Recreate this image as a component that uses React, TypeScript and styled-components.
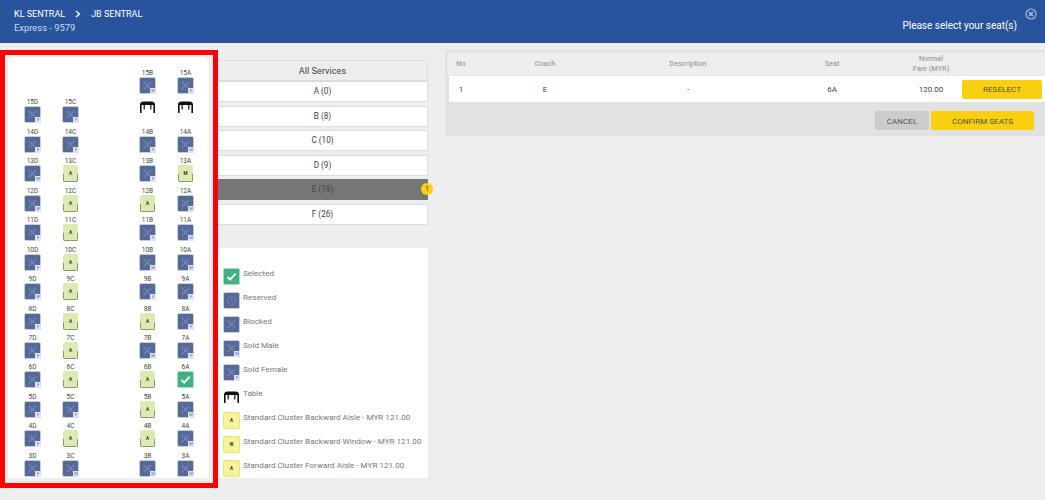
import React from "react";
import styled, {createGlobalStyle} from "styled-components";

const GlobalStyle = createGlobalStyle`
  html, body {
    margin: 0;
    padding: 0;
    height: 100%;
    background: #eeeeee;
    overflow: hidden;
    font-family: Roboto, "Liberation Sans", sans-serif;
  }
`

const Page = styled.div`
  width: 1045px;
  height: 500px;
  overflow: hidden;
  background: #eeeeee;
`

const Header = styled.header`
  height: 43px;
  background: #27549c;
  color: white;
  display: flex;
  justify-content: space-between;
  padding: 8px 15px 0 14px;
  box-sizing: border-box;
  position: relative;
`

const RouteBlock = styled.div`
  display: flex;
  flex-direction: column;
  gap: 2px;
`

const RouteLine = styled.div`
  display: flex;
  align-items: center;
  font-size: 9px;
  line-height: 12px;
  gap: 10px;
`

const ServiceLine = styled.div`
  font-size: 9.4px;
  line-height: 12px;
  color: #cfd9ea;
`

const HeaderTitle = styled.div`
  font-size: 10px;
  line-height: 14px;
  margin-top: 11px;
  margin-right: 13px;
`

const CloseButton = styled.div`
  position: absolute;
  top: 8px;
  right: 8px;
  color: #a9bcdc;
  display: flex;
`

const Main = styled.main`
  display: flex;
  padding: 7px 0 0 0;
`

const SeatFrame = styled.section`
  width: 218px;
  height: 438px;
  box-sizing: border-box;
  border: 5px solid #ff0000;
  background: #eeeeee;
  flex: none;
  overflow: hidden;
  padding: 2px 4px 0 3px;
`

const SeatPanel = styled.div`
  background: white;
  border-radius: 6px 6px 0 0;
  height: 421px;
  overflow: hidden;
  padding: 12px 0 0 16px;
  box-sizing: border-box;
  display: grid;
  grid-template-columns: 17px 17px 18px 17px 17px;
  column-gap: 21px;
  grid-auto-rows: 29.45px;
`

const SeatCell = styled.div`
  width: 17px;
  display: flex;
  flex-direction: column;
  align-items: center;
`

const SeatLabel = styled.div`
  font-size: 6.5px;
  line-height: 8px;
  height: 8px;
  color: #444444;
  white-space: nowrap;
`

const SeatBox = styled.div<{ $kind: string }>`
  width: ${p => p.$kind === "green" ? "15px" : "17px"};
  height: 17px;
  flex: none;
  box-sizing: border-box;
  position: relative;
  border-radius: 2px;
  display: flex;
  align-items: center;
  justify-content: center;
  font-size: 4.5px;
  font-weight: 700;
  color: #333333;
  background: ${p => p.$kind === "selected" ? "#3fb27f"
    : p.$kind === "sold" ? "#566a99"
    : p.$kind === "yellow" ? "#f7f39b" : "#dcebb2"};
  ${p => p.$kind === "sold" && "border: 1px solid #c4cde0;"}
  ${p => p.$kind === "selected" && "border: 1px solid #a8dcc2;"}
  ${p => p.$kind === "yellow" && "border: 1px solid #e6e27c;"}
  ${p => p.$kind === "green" && `
    &::after {
      content: "";
      position: absolute;
      left: 0;
      right: 0;
      bottom: 0;
      height: 7px;
      border: 1px solid #8a9a6c;
      border-top: none;
      border-radius: 0 0 2px 2px;
    }
  `}
`

const GenderTag = styled.span`
  position: absolute;
  right: -1px;
  bottom: -1px;
  width: 6px;
  height: 6px;
  background: #dde3f4;
  color: #5a6a96;
  font-size: 4px;
  line-height: 6px;
  font-weight: 400;
  text-align: center;
`

const TableSlot = styled.div`
  width: 17px;
  margin-top: 3px;
  display: flex;
  justify-content: center;
  flex: none;
`

const Middle = styled.div`
  width: 210px;
  flex: none;
  display: flex;
  flex-direction: column;
`

const CoachList = styled.div`
  margin-top: 10px;
  display: flex;
  flex-direction: column;
  gap: 3.6px;
`

const CoachHead = styled.div`
  height: 21px;
  box-sizing: border-box;
  margin-bottom: -3.6px;
  background: #eeeeee;
  border: 1px solid #dddddd;
  border-left: none;
  border-radius: 0 2px 0 0;
  font-size: 9.2px;
  line-height: 20px;
  text-align: center;
  color: #444444;
`

const CoachItem = styled.div<{ $active?: boolean }>`
  height: 21px;
  box-sizing: border-box;
  position: relative;
  background: ${p => p.$active ? "#767676" : "white"};
  border: 1px solid ${p => p.$active ? "#767676" : "#dddddd"};
  border-left: none;
  font-size: 8.2px;
  line-height: 19px;
  text-align: center;
  color: #444444;
`

const CoachBadge = styled.span`
  position: absolute;
  right: -6px;
  top: 3px;
  width: 12px;
  height: 12px;
  border-radius: 50%;
  background: #f8d00f;
  color: #444444;
  font-size: 7px;
  line-height: 12px;
  text-align: center;
`

const Legend = styled.div`
  margin-top: 23px;
  height: 230px;
  box-sizing: border-box;
  background: white;
  border-radius: 0 4px 0 0;
  padding: 20px 0 0 5px;
  display: flex;
  flex-direction: column;
  overflow: hidden;
`

const LegendRow = styled.div`
  height: 24px;
  flex: none;
  display: flex;
  gap: 3px;
  font-size: 8.1px;
  line-height: 11px;
  color: #777777;
`

const LegendText = styled.span`
  white-space: nowrap;
`

const Summary = styled.div`
  margin: 0 0 0 17px;
  padding-top: 2px;
  box-sizing: border-box;
  flex: 1;
  background: #e2e2e2;
  height: 86px;
`

const SummaryHead = styled.div`
  height: 24px;
  box-sizing: border-box;
  background: #eeeeee;
  border: 1px solid #e8e8e8;
  margin: 0 0 0 2px;
  padding-left: 1px;
  display: grid;
  grid-template-columns: 24px 144px 142px 146px 52px 1fr;
  font-size: 7.3px;
  font-weight: 500;
  line-height: 10px;
  color: #a0a0a0;
  align-items: center;
  text-align: center;
`

const SummaryRow = styled.div`
  height: 26px;
  margin-left: 4px;
  background: white;
  display: grid;
  grid-template-columns: 24px 144px 142px 146px 52px 1fr;
  font-size: 8px;
  color: #444444;
  align-items: center;
  text-align: center;
`

const YellowButton = styled.button<{ $wide?: boolean }>`
  border: none;
  border-radius: 2px;
  background: #f8d00f;
  color: #555544;
  font-family: inherit;
  font-size: 8.1px;
  padding: 0;
  height: 19px;
  width: ${p => p.$wide ? "103px" : "80px"};
  margin-left: ${p => p.$wide ? "0" : "5px"};
`

const GreyButton = styled.button`
  border: none;
  border-radius: 2px;
  background: #cccccc;
  color: #555555;
  font-family: inherit;
  font-size: 8.1px;
  padding: 0;
  height: 19px;
  width: 54px;
`

const SummaryActions = styled.div`
  display: flex;
  justify-content: flex-end;
  gap: 2px;
  padding: 9px 11px 0 0;
`

type Seat = { id: string, kind: string, tag?: string, mark?: string }

const sold = (id: string, tag: string): Seat => ({id, kind: "sold", tag});
const open = (id: string, mark = "A"): Seat => ({id, kind: "green", mark});

const rows: (Seat | null)[][] = [
  [null, null, null, sold("15B", "M"), sold("15A", "F")],
  [sold("15D", "F"), sold("15C", "F"), null, {id: "t1", kind: "table"}, {id: "t2", kind: "table"}],
  [sold("14D", "F"), sold("14C", "F"), null, sold("14B", "F"), sold("14A", "M")],
  [sold("13D", "M"), open("13C"), null, sold("13B", "F"), open("13A", "M")],
  [sold("12D", "M"), open("12C"), null, open("12B"), sold("12A", "M")],
  [sold("11D", "F"), open("11C"), null, sold("11B", "F"), sold("11A", "M")],
  [sold("10D", "F"), open("10C"), null, sold("10B", "M"), sold("10A", "M")],
  [sold("9D", "M"), open("9C"), null, sold("9B", "F"), sold("9A", "F")],
  [sold("8D", "F"), open("8C"), null, open("8B"), sold("8A", "F")],
  [sold("7D", "F"), open("7C"), null, sold("7B", "M"), sold("7A", "F")],
  [sold("6D", "F"), open("6C"), null, open("6B"), {id: "6A", kind: "selected"}],
  [sold("5D", "F"), sold("5C", "F"), null, open("5B"), sold("5A", "M")],
  [sold("4D", "F"), open("4C"), null, open("4B"), sold("4A", "M")],
  [sold("3D", "F"), sold("3C", "M"), null, sold("3B", "M"), sold("3A", "M")],
];

const Cross = () => (
  <svg width="11" height="11" viewBox="0 0 11 11">
    <path d="M2 2L9 9M9 2L2 9" stroke="#7686ac" strokeWidth="1.2"/>
  </svg>
);

const Check = () => (
  <svg width="11" height="11" viewBox="0 0 11 11">
    <path d="M1.5 6L4.2 8.6L9.6 2.6" stroke="white" strokeWidth="1.8" fill="none"/>
  </svg>
);

const Clock = () => (
  <svg width="11" height="11" viewBox="0 0 11 11" fill="none" stroke="#7686ac" strokeWidth="0.8">
    <circle cx="5.5" cy="5.5" r="4.2"/>
    <path d="M5.5 3V5.7L7.2 6.6"/>
  </svg>
);

const TableIcon = () => (
  <svg width="15" height="12" viewBox="0 0 15 12">
    <path d="M0 4Q0 0.5 3.5 0.5H11.5Q15 0.5 15 4Z" fill="#111111"/>
    <rect x="0" y="3.5" width="1.6" height="8.5" fill="#111111"/>
    <rect x="13.4" y="3.5" width="1.6" height="8.5" fill="#111111"/>
    <rect x="3.6" y="3.5" width="1.2" height="5" fill="#111111"/>
    <rect x="10.2" y="3.5" width="1.2" height="5" fill="#111111"/>
  </svg>
);

const SeatIcon = ({seat}: { seat: Seat }) => {
  return (
    <SeatBox $kind={seat.kind}>
      {seat.kind === "sold" && <Cross/>}
      {seat.kind === "selected" && <Check/>}
      {seat.mark}
      {seat.tag && <GenderTag>{seat.tag}</GenderTag>}
    </SeatBox>
  );
};

const coaches = ["A (0)", "B (8)", "C (10)", "D (9)", "E (19)", "F (26)"];

const App = () => {
  return (
    <Page>
      <GlobalStyle/>
      <Header>
        <RouteBlock>
          <RouteLine>
            <span>KL SENTRAL</span>
            <svg width="6" height="8" viewBox="0 0 6 8">
              <path d="M1 1L4.5 4L1 7" stroke="white" strokeWidth="1.4" fill="none"/>
            </svg>
            <span>JB SENTRAL</span>
          </RouteLine>
          <ServiceLine>Express - 9579</ServiceLine>
        </RouteBlock>
        <HeaderTitle>Please select your seat(s)</HeaderTitle>
        <CloseButton>
          <svg width="12" height="12" viewBox="0 0 12 12" fill="none" stroke="currentColor">
            <circle cx="6" cy="6" r="5" strokeWidth="1.2"/>
            <path d="M4 4L8 8M8 4L4 8" strokeWidth="1.6"/>
          </svg>
        </CloseButton>
      </Header>
      <Main>
        <SeatFrame>
          <SeatPanel>
            {rows.map((row, r) => row.map((seat, i) => (
              <SeatCell key={r + "-" + i}>
                {seat && seat.kind === "table" && <TableSlot><TableIcon/></TableSlot>}
                {seat && seat.kind !== "table" && <SeatLabel>{seat.id}</SeatLabel>}
                {seat && seat.kind !== "table" && <SeatIcon seat={seat}/>}
              </SeatCell>
            )))}
          </SeatPanel>
        </SeatFrame>
        <Middle>
          <CoachList>
            <CoachHead>All Services</CoachHead>
            {coaches.map(c => (
              <CoachItem key={c} $active={c === "E (19)"}>
                {c}
                {c === "E (19)" && <CoachBadge>1</CoachBadge>}
              </CoachItem>
            ))}
          </CoachList>
          <Legend>
            <LegendRow><SeatIcon seat={{id: "", kind: "selected"}}/><LegendText>Selected</LegendText></LegendRow>
            <LegendRow><SeatBox $kind="sold"><Clock/></SeatBox><LegendText>Reserved</LegendText></LegendRow>
            <LegendRow><SeatIcon seat={{id: "", kind: "sold"}}/><LegendText>Blocked</LegendText></LegendRow>
            <LegendRow><SeatIcon seat={{id: "", kind: "sold", tag: "M"}}/><LegendText>Sold Male</LegendText></LegendRow>
            <LegendRow><SeatIcon seat={{id: "", kind: "sold", tag: "F"}}/><LegendText>Sold Female</LegendText></LegendRow>
            <LegendRow><TableSlot><TableIcon/></TableSlot><LegendText>Table</LegendText></LegendRow>
            <LegendRow><SeatIcon seat={{id: "", kind: "yellow", mark: "A"}}/><LegendText>Standard Cluster Backward Aisle - MYR 121.00</LegendText></LegendRow>
            <LegendRow><SeatIcon seat={{id: "", kind: "yellow", mark: "W"}}/><LegendText>Standard Cluster Backward Window - MYR 121.00</LegendText></LegendRow>
            <LegendRow><SeatIcon seat={{id: "", kind: "yellow", mark: "A"}}/><LegendText>Standard Cluster Forward Aisle - MYR 121.00</LegendText></LegendRow>
          </Legend>
        </Middle>
        <Summary>
          <SummaryHead>
            <span>No</span><span>Coach</span><span>Description</span><span>Seat</span><span>Normal<br/>Fare (MYR)</span><span/>
          </SummaryHead>
          <SummaryRow>
            <span>1</span><span>E</span><span>-</span><span>6A</span><span>120.00</span>
            <YellowButton>RESELECT</YellowButton>
          </SummaryRow>
          <SummaryActions>
            <GreyButton>CANCEL</GreyButton>
            <YellowButton $wide>CONFIRM SEATS</YellowButton>
          </SummaryActions>
        </Summary>
      </Main>
    </Page>
  );
}

export default App;
